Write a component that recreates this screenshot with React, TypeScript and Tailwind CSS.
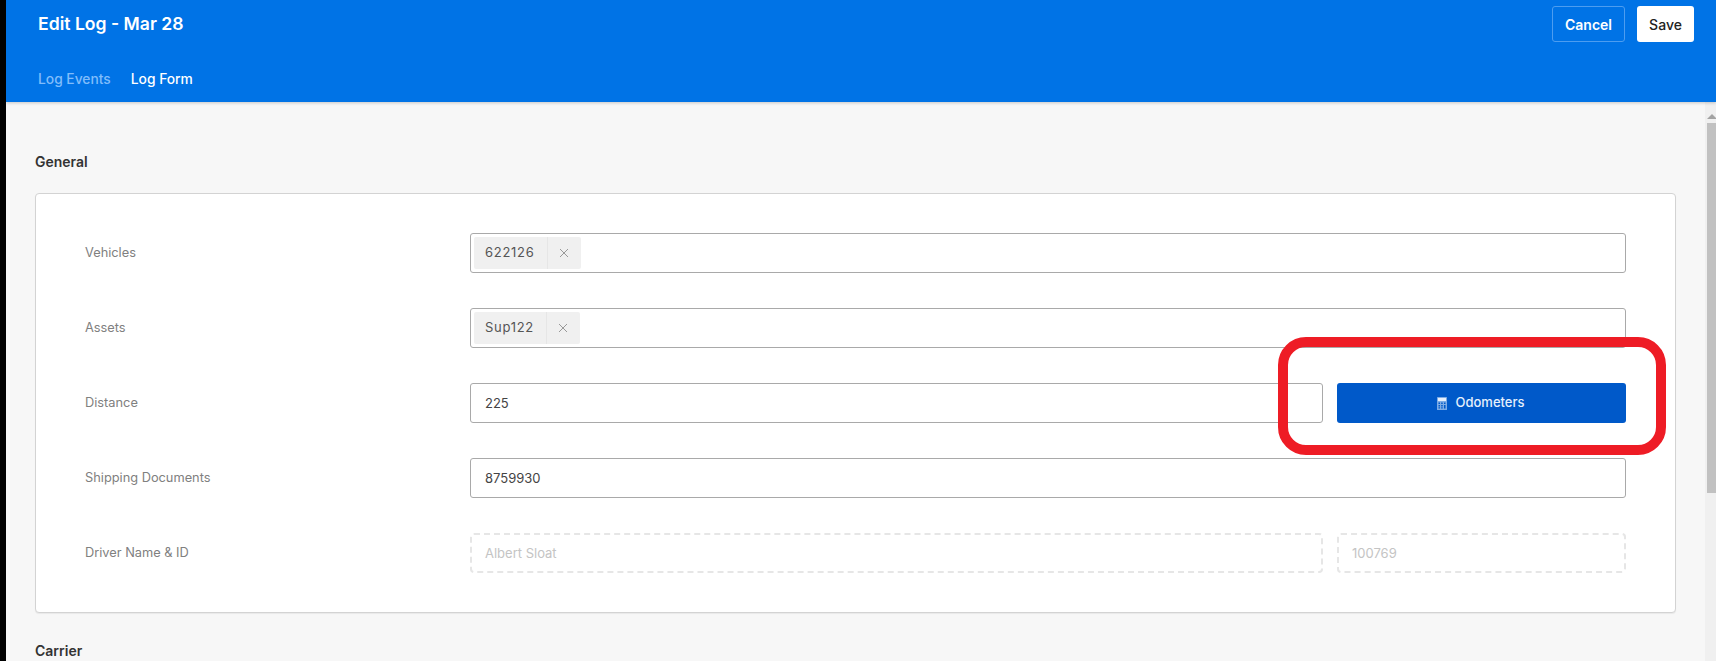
import type { ReactNode } from 'react'

function Row({ label, children }: { label: string; children: ReactNode }) {
  return (
    <div className="flex h-10 items-center">
      <div className="w-[385px] shrink-0 text-[12.8px] text-[#808080]">{label}</div>
      <div className="flex min-w-0 flex-1 gap-[14px]">{children}</div>
    </div>
  )
}

function Tag({ text, width }: { text: string; width: string }) {
  return (
    <span className="flex h-8 items-center rounded-[2px] bg-[#f0f0f0] text-[13px] tracking-[0.7px] text-[#555]">
      <span className={`${width} pl-[11px]`}>{text}</span>
      <span className="flex h-full w-[34px] items-center justify-center border-l border-[#e6e6e6] pr-[2px] text-[#999]">
        <svg width="10" height="10" viewBox="0 0 10 10" fill="none" stroke="currentColor" strokeWidth="1">
          <path d="M1 1l8 8M9 1L1 9" />
        </svg>
      </span>
    </span>
  )
}

function TagInput({ text, width }: { text: string; width: string }) {
  return (
    <div className="flex h-10 flex-1 items-center rounded-[3px] border border-[#a9a9a9] bg-white pl-[3px]">
      <Tag text={text} width={width} />
    </div>
  )
}

function TextBox({ value }: { value: string }) {
  return (
    <div className="flex h-10 min-w-0 flex-1 items-center rounded-[3px] border border-[#a9a9a9] bg-white pl-[14px] pt-[1px] text-[13px] text-[#444]">
      {value}
    </div>
  )
}

function ReadOnly({ value, className }: { value: string; className: string }) {
  return (
    <div className={`flex h-10 items-center rounded-[4px] border-2 border-dashed border-[#e6e6e6] pl-[13px] pt-[1px] text-[13px] text-[#c4c4c4] ${className}`}>
      {value}
    </div>
  )
}

function CalcIcon() {
  return (
    <svg width="10" height="13" viewBox="0 0 10 13" className="text-[#e6f0fc]">
      <rect width="10" height="13" rx="0.5" fill="currentColor" opacity="0.55" />
      <path d="M1 1h8v3H1z" fill="currentColor" />
      <path d="M1.5 5.5h1.5V7H1.5zM4.2 5.5h1.5V7H4.2zM7 5.5h1.5V7H7zM1.5 8h1.5v1.5H1.5zM4.2 8h1.5v1.5H4.2zM7 8h1.5v3.5H7zM1.5 10.3h1.5v1.2H1.5zM4.2 10.3h1.5v1.2H4.2z" fill="#0059c9" />
    </svg>
  )
}

export default function App() {
  return (
    <div className="flex h-[661px] overflow-hidden bg-black font-['Inter',sans-serif]">
      <div className="w-[6px] shrink-0" />
      <div className="flex min-w-0 flex-1 flex-col">
        <header className="z-10 flex h-[102px] shrink-0 flex-col bg-[#0073e6] pl-[32px] pr-[22px] shadow-[0_1px_3px_rgba(0,0,0,0.2)]">
          <div className="flex items-center justify-between pt-[6px]">
            <h1 className="text-[17.6px] font-semibold text-white">Edit Log - Mar 28</h1>
            <div className="flex gap-[12px]">
              <button className="h-[36px] w-[73px] rounded-[3px] border border-[#4d9df0] text-[14px] font-semibold text-white">Cancel</button>
              <button className="h-[36px] w-[57px] rounded-[3px] bg-white text-[14px] font-medium text-[#222]">Save</button>
            </div>
          </div>
          <nav className="mt-[27px] flex gap-[20px] text-[13.8px] font-medium">
            <span className="text-[#80bdfb]">Log Events</span>
            <span className="text-white">Log Form</span>
          </nav>
        </header>
        <div className="flex min-h-0 flex-1">
          <main className="min-w-0 flex-1 bg-[#f7f7f7] pl-[29px] pr-[29px] pt-[50px]">
            <h2 className="text-[14px] font-semibold leading-[20px] text-[#333]">General</h2>
            <section className="relative mt-[21px] flex flex-col gap-[35px] rounded-[4px] border border-[#d3d3d3] bg-white py-[39px] pl-[49px] pr-[49px] shadow-[0_1px_1px_rgba(0,0,0,0.06)]">
              <Row label="Vehicles">
                <TagInput text="622126" width="w-[73px]" />
              </Row>
              <Row label="Assets">
                <TagInput text="Sup122" width="w-[72px]" />
              </Row>
              <Row label="Distance">
                <TextBox value="225" />
                <button className="flex h-10 w-[289px] shrink-0 items-center justify-center gap-[9px] rounded-[3px] bg-[#0059c9] pr-[2px] text-[13px] font-medium text-[#e6f0fc]">
                  <CalcIcon />
                  Odometers
                </button>
              </Row>
              <Row label="Shipping Documents">
                <TextBox value="8759930" />
              </Row>
              <Row label="Driver Name & ID">
                <ReadOnly value="Albert Sloat" className="min-w-0 flex-1" />
                <ReadOnly value="100769" className="w-[289px] shrink-0" />
              </Row>
              <div className="pointer-events-none absolute left-[1242px] top-[143px] h-[118px] w-[388px] rounded-[28px] border-[10px] border-[#ee1c25]" />
            </section>
            <h2 className="mt-[28px] text-[14px] font-semibold leading-[20px] text-[#333]">Carrier</h2>
          </main>
          <div className="flex w-[11px] shrink-0 flex-col items-end bg-[#f0f0f0]">
            <div className="flex h-[21px] w-[9px] items-center justify-center pt-[8px]">
              <div className="h-0 w-0 border-x-[5px] border-b-[5px] border-x-transparent border-b-[#a3a3a3]" />
            </div>
            <div className="h-[370px] w-[9px] bg-[#c1c1c1]" />
          </div>
        </div>
      </div>
    </div>
  )
}
